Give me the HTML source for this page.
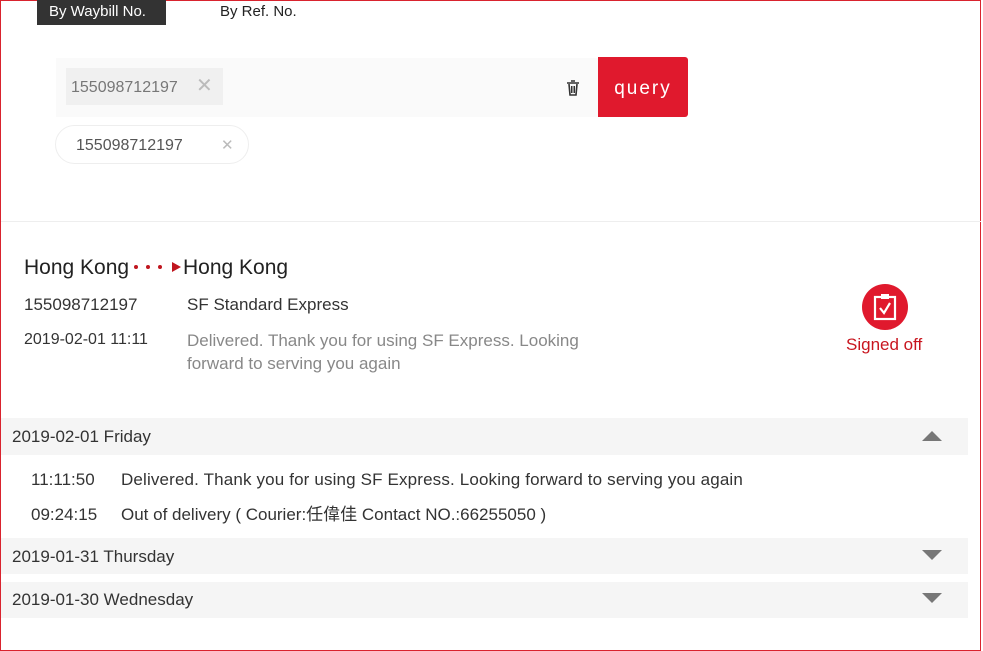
<!DOCTYPE html>
<html><head><meta charset="utf-8"><style>
*{margin:0;padding:0;box-sizing:border-box}
body{width:983px;height:651px;overflow:hidden;background:#fff;font-family:"Liberation Sans","Noto Sans CJK SC",sans-serif;color:#333;position:relative}
.frame{position:absolute;left:0;top:0;width:981px;height:651px;border:1px solid #d9232e;}
.a{position:absolute;white-space:nowrap;line-height:20px}
.band{position:absolute;left:1px;width:967px;background:#f5f5f5;font-size:17px;color:#333;padding-left:11px}
.tri{position:absolute;right:26px;width:0;height:0;border-left:10px solid transparent;border-right:10px solid transparent}
.dot{position:absolute;width:4px;height:4px;border-radius:50%;background:#c0161f}
</style></head><body>
<div class="frame"></div>
<div class="a" style="left:37px;top:0;width:129px;height:25px;background:#333;color:#fff;font-size:15px;padding:2px 0 0 12px">By Waybill No.</div>
<div class="a" style="left:220px;top:2px;font-size:15px;color:#222">By Ref. No.</div>
<div class="a" style="left:56px;top:58px;width:542px;height:59px;background:#fafafa"></div>
<div class="a" style="left:66px;top:68px;width:157px;height:37px;background:#f0f0f0;color:#777;font-size:16px;padding:10px 0 0 5px">155098712197 <span style="color:#bbb;font-size:20px;position:absolute;left:130px;top:8px">✕</span></div>
<svg class="a" style="left:566px;top:80px" width="14" height="16" viewBox="0 0 14 16"><path d="M1 3h12M5 1h4M3 4l1 11h6l1-11" fill="none" stroke="#333" stroke-width="1.6"/><path d="M5.5 6v7M7 6v7M8.5 6v7" stroke="#333" stroke-width="1"/></svg>
<div class="a" style="left:598px;top:57px;width:90px;height:60px;background:#e0192d;border-radius:0 3px 3px 0;color:#fff;font-size:19px;letter-spacing:2px;text-align:center;line-height:64px">query</div>
<div class="a" style="left:55px;top:125px;width:194px;height:39px;border:1px solid #eee;border-radius:20px;color:#555;font-size:16px;padding:10px 0 0 20px">155098712197<span style="position:absolute;left:165px;top:10px;color:#bbb;font-size:15px">✕</span></div>
<div class="a" style="left:1px;top:221px;width:980px;height:1px;background:#eee"></div>
<div class="a" style="left:24px;top:256px;font-size:21px;color:#222;line-height:24px">Hong Kong</div>
<div class="dot" style="left:134px;top:265px"></div><div class="dot" style="left:146px;top:265px"></div><div class="dot" style="left:158px;top:265px"></div>
<div class="a" style="left:172px;top:262px;width:0;height:0;border-top:5px solid transparent;border-bottom:5px solid transparent;border-left:9px solid #c0161f"></div>
<div class="a" style="left:183px;top:256px;font-size:21px;color:#222;line-height:24px">Hong Kong</div>
<div class="a" style="left:24px;top:295px;font-size:17px;color:#333">155098712197</div>
<div class="a" style="left:187px;top:295px;font-size:17px;color:#333">SF Standard Express</div>
<div class="a" style="left:24px;top:330px;font-size:16px;color:#333">2019-02-01 11:11</div>
<div class="a" style="left:187px;top:329px;font-size:17px;color:#888;line-height:23px">Delivered. Thank you for using SF Express. Looking<br>forward to serving you again</div>
<div class="a" style="left:862px;top:284px;width:46px;height:46px;border-radius:50%;background:#e0192d"></div>
<svg class="a" style="left:872px;top:292px" width="26" height="30" viewBox="0 0 26 30"><rect x="3" y="5" width="20" height="22" fill="none" stroke="#fff" stroke-width="2.2"/><rect x="9" y="2" width="8" height="5" fill="#fff"/><path d="M8 16l4 5 6-10" fill="none" stroke="#fff" stroke-width="2.2"/></svg>
<div class="a" style="left:846px;top:335px;font-size:17px;color:#c8161f">Signed off</div>
<div class="band" style="top:418px;height:37px;line-height:38px">2019-02-01 Friday<div class="tri" style="top:13px;border-bottom:10px solid #777"></div></div>
<div class="a" style="left:31px;top:470px;font-size:17px;color:#333">11:11:50</div>
<div class="a" style="left:121px;top:470px;font-size:17px;color:#333;letter-spacing:0.15px">Delivered. Thank you for using SF Express. Looking forward to serving you again</div>
<div class="a" style="left:31px;top:505px;font-size:17px;color:#333">09:24:15</div>
<div class="a" style="left:121px;top:505px;font-size:17px;color:#333">Out of delivery ( Courier:任偉佳 Contact NO.:66255050 )</div>
<div class="band" style="top:538px;height:36px;line-height:38px">2019-01-31 Thursday<div class="tri" style="top:12px;border-top:10px solid #777"></div></div>
<div class="band" style="top:582px;height:36px;line-height:36px">2019-01-30 Wednesday<div class="tri" style="top:11px;border-top:10px solid #777"></div></div>
</body></html>
